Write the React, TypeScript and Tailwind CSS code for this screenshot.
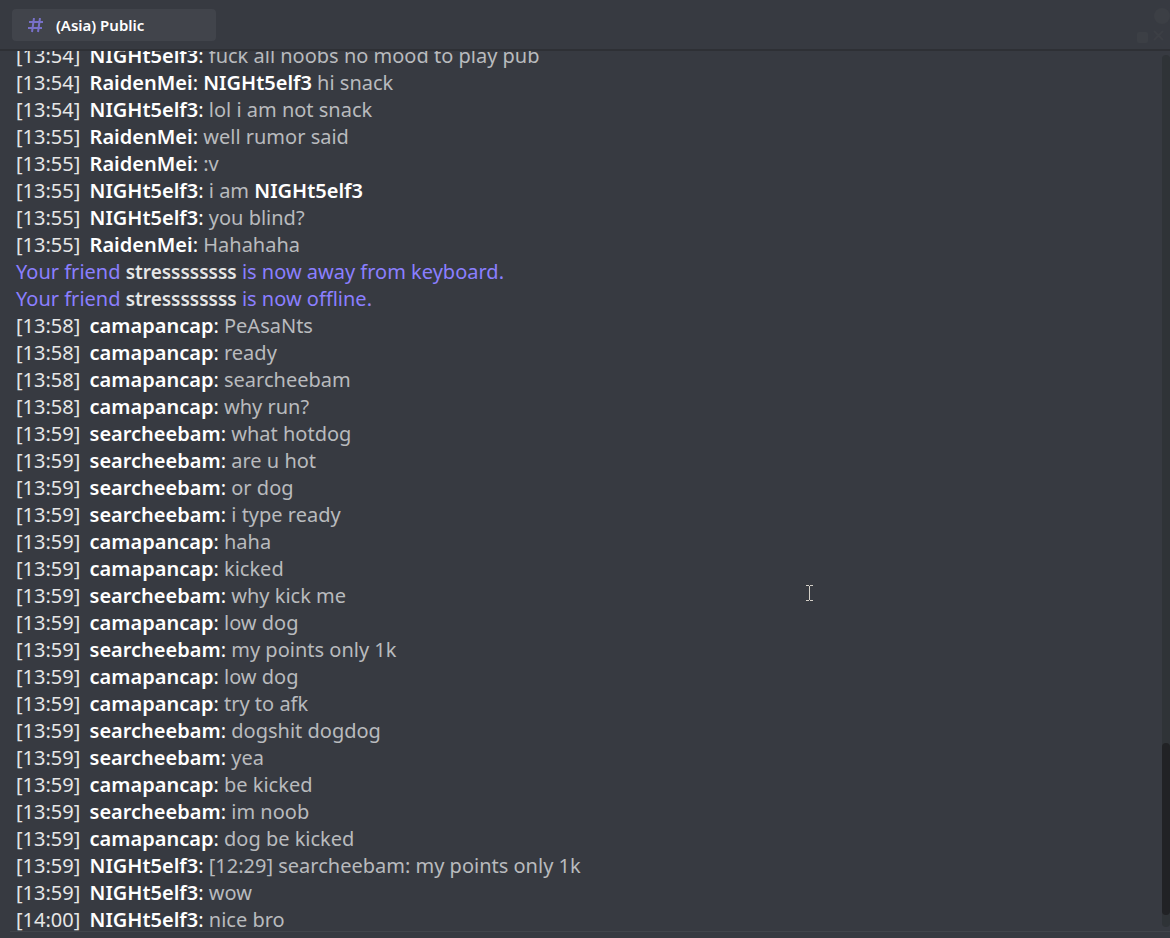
import React from "react";

type Message = {
  time?: string;
  name: string;
  text: React.ReactNode;
};

const messages: Message[] = [
  { time: "13:54", name: "NIGHt5elf3", text: "fuck all noobs no mood to play pub" },
  { time: "13:54", name: "RaidenMei", text: <><Mention>NIGHt5elf3</Mention> hi snack</> },
  { time: "13:54", name: "NIGHt5elf3", text: "lol i am not snack" },
  { time: "13:55", name: "RaidenMei", text: "well rumor said" },
  { time: "13:55", name: "RaidenMei", text: ":v" },
  { time: "13:55", name: "NIGHt5elf3", text: <>i am <Mention>NIGHt5elf3</Mention></> },
  { time: "13:55", name: "NIGHt5elf3", text: "you blind?" },
  { time: "13:55", name: "RaidenMei", text: "Hahahaha" },
  { name: "stressssssss", text: "is now away from keyboard." },
  { name: "stressssssss", text: "is now offline." },
  { time: "13:58", name: "camapancap", text: "PeAsaNts" },
  { time: "13:58", name: "camapancap", text: "ready" },
  { time: "13:58", name: "camapancap", text: "searcheebam" },
  { time: "13:58", name: "camapancap", text: "why run?" },
  { time: "13:59", name: "searcheebam", text: "what hotdog" },
  { time: "13:59", name: "searcheebam", text: "are u hot" },
  { time: "13:59", name: "searcheebam", text: "or dog" },
  { time: "13:59", name: "searcheebam", text: "i type ready" },
  { time: "13:59", name: "camapancap", text: "haha" },
  { time: "13:59", name: "camapancap", text: "kicked" },
  { time: "13:59", name: "searcheebam", text: "why kick me" },
  { time: "13:59", name: "camapancap", text: "low dog" },
  { time: "13:59", name: "searcheebam", text: "my points only 1k" },
  { time: "13:59", name: "camapancap", text: "low dog" },
  { time: "13:59", name: "camapancap", text: "try to afk" },
  { time: "13:59", name: "searcheebam", text: "dogshit dogdog" },
  { time: "13:59", name: "searcheebam", text: "yea" },
  { time: "13:59", name: "camapancap", text: "be kicked" },
  { time: "13:59", name: "searcheebam", text: "im noob" },
  { time: "13:59", name: "camapancap", text: "dog be kicked" },
  { time: "13:59", name: "NIGHt5elf3", text: "[12:29] searcheebam: my points only 1k" },
  { time: "13:59", name: "NIGHt5elf3", text: "wow" },
  { time: "14:00", name: "NIGHt5elf3", text: "nice bro" },
];

function Mention({ children }: { children: React.ReactNode }) {
  return <span className="font-semibold text-white">{children}</span>;
}

function ChatLine({ time, name, text }: Message) {
  if (!time) {
    return (
      <li className="text-[#8b7fff]">
        Your friend <span className="text-[19px] leading-none font-semibold text-[#e6e6e6]">{name}</span> {text}
      </li>
    );
  }
  return (
    <li className="text-[#b9bbbe]">
      <span className="mr-1 text-[#e6e6e6]">[{time}]</span>{" "}
      <span className="text-white">
        <span className="font-semibold">{name}</span>:
      </span>{" "}
      {text}
    </li>
  );
}

export default function App() {
  return (
    <div className="flex h-screen flex-col overflow-hidden bg-[#373a41] font-['Noto_Sans',sans-serif]">
      {/* Channel tabs */}
      <header className="flex h-[51px] shrink-0 items-start justify-between border-b-2 border-[#2e3035] pt-[9px] pl-3">
        <button
          type="button"
          className="flex h-8 w-51 items-center gap-3 rounded bg-[#41444b] px-4 pt-px text-[15px] font-semibold text-white"
        >
          <svg width="16" height="16" viewBox="0 0 16 16" fill="none" stroke="#7770c8" strokeWidth="2" aria-hidden="true">
            <path d="M6 0L4 14M12 0l-2 14M1 4h14M0 10h14" />
          </svg>
          (Asia) Public
        </button>
        <svg className="overflow-visible" width="40" height="40" viewBox="0 0 40 40" fill="#3c3f45" aria-hidden="true">
          <circle cx="32" cy="7" r="8" />
          <rect x="7" y="23" width="11" height="11" rx="2" />
          <path d="M24 22l9 9M33 22l-9 9" stroke="#3c3f45" strokeWidth="2" />
        </svg>
      </header>

      {/* Chat log */}
      <main className="flex min-h-0 flex-1 overflow-hidden">
        <ul className="-mt-[9px] min-w-0 flex-1 pl-4 text-xl leading-[27px]">
          {messages.map((message, i) => (
            <ChatLine key={i} {...message} />
          ))}
        </ul>
        <div className="mt-1 mb-1 flex w-2 flex-col justify-end rounded bg-[#2f3337] pb-3">
          <div className="h-43 rounded bg-[#212225]" />
        </div>
      </main>

      <footer className="ml-2.5 h-[7px] shrink-0 border-t border-[#42454b]" />

      {/* Text cursor */}
      <svg
        className="pointer-events-none absolute top-[585px] left-[806px]"
        width="7"
        height="16"
        viewBox="0 0 7 16"
        fill="none"
        stroke="#d4d0c8"
        shapeRendering="crispEdges"
        aria-hidden="true"
      >
        <path d="M0 .5h3M4 .5h3M3.500 1v14M0 15.500h3M4 15.500h3" />
      </svg>
    </div>
  );
}
